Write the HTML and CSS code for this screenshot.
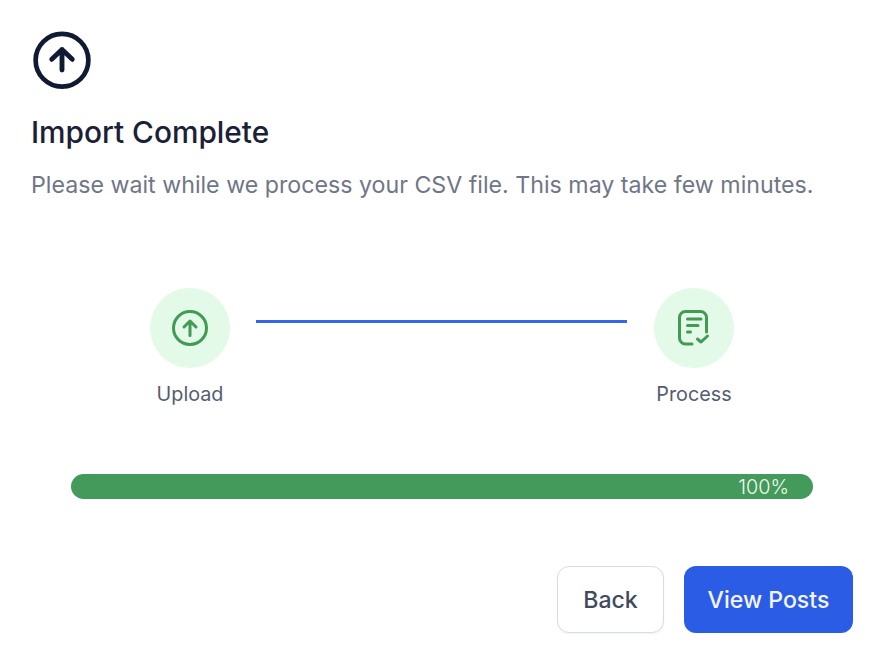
FILE: index.html
```html
<!DOCTYPE html>
<html lang="en">
<head>
    <meta charset="UTF-8">
    <meta name="viewport" content="width=device-width, initial-scale=1.0">
    <title>Import Complete</title>
    <link rel="stylesheet" href="styles.css">
</head>
<body>
    <div class="import-modal">
        <svg class="header-icon" viewBox="0 0 60 60" fill="none" stroke="#111a33" stroke-linecap="round" stroke-linejoin="round">
            <circle cx="30" cy="30" r="27" stroke-width="4.8"/>
            <path d="M30 40V19M19.5 29L30 19L40.5 29" stroke-width="5"/>
        </svg>
        <h1>Import Complete</h1>
        <p class="subtitle">Please wait while we process your CSV file. This may take few minutes.</p>

        <div class="steps">
            <div class="step">
                <div class="step-circle">
                    <svg class="step-icon" viewBox="0 0 36 36" fill="none" stroke="#439a55" stroke-width="3" stroke-linecap="round" stroke-linejoin="round">
                        <circle cx="18" cy="18" r="16.5"/>
                        <path d="M18 25.5V11M12 17L18 11L24 17"/>
                    </svg>
                </div>
                <span class="step-label">Upload</span>
            </div>
            <div class="step-line"></div>
            <div class="step">
                <div class="step-circle">
                    <svg class="step-icon" viewBox="0 0 36 36" fill="none" stroke="#439a55" stroke-width="3" stroke-linecap="round" stroke-linejoin="round">
                        <path d="M16 34H9.5a6 6 0 0 1-6-6V7.5a6 6 0 0 1 6-6H24.500a6 6 0 0 1 6 6V22"/>
                        <path d="M11.500 9H25M11.500 15.500H22M11.500 22H14.500"/>
                        <path d="M21.500 29L25 32L31.500 26"/>
                    </svg>
                </div>
                <span class="step-label">Process</span>
            </div>
        </div>

        <div class="progress-bar">
            <div class="progress-fill">100%</div>
        </div>

        <div class="button-group">
            <button class="btn btn-back">Back</button>
            <button class="btn btn-primary">View Posts</button>
        </div>
    </div>
</body>
</html>
```

FILE: styles.css
```css
* {
    box-sizing: border-box;
}

body {
    font-family: Inter, "Liberation Sans", sans-serif;
    margin: 0;
    padding: 0;
    background: #fff;
}

.import-modal {
    width: 882px;
    height: 659px;
    padding: 31px 29px 26px 31px;
    display: flex;
    flex-direction: column;
}

.header-icon {
    width: 60px;
    height: 60px;
    margin-left: 1px;
    display: block;
}

h1 {
    margin: 24px 0 0;
    font-size: 29.8px;
    line-height: 36px;
    font-weight: 500;
    color: #1a2136;
}

.subtitle {
    margin: 20px 0 0;
    font-size: 23.2px;
    line-height: 30px;
    color: #6f7687;
}

.steps {
    display: flex;
    align-items: flex-start;
    margin: 88px 0 0 119px;
}

.step {
    width: 80px;
    display: flex;
    flex-direction: column;
    align-items: center;
}

.step-circle {
    width: 80px;
    height: 80px;
    border-radius: 50%;
    background: #e2fae7;
    display: flex;
    align-items: center;
    justify-content: center;
}

.step-icon {
    width: 36px;
    height: 36px;
}

.step-label {
    margin-top: 13px;
    font-size: 19.8px;
    line-height: 26px;
    color: #555d70;
    white-space: nowrap;
}

.step-line {
    width: 371px;
    height: 3px;
    margin: 32px 27px 0 26px;
    background: #3565e8;
}

.progress-bar {
    width: 742px;
    height: 26px;
    margin: 67px 0 0 40px;
    border-radius: 13px;
    background: #e5e7eb;
    overflow: hidden;
}

.progress-fill {
    width: 100%;
    height: 100%;
    padding-right: 24px;
    background: #439a5b;
    color: #f0f7f1;
    font-size: 19.8px;
    line-height: 26px;
    font-weight: 300;
    text-align: right;
}

.button-group {
    display: flex;
    justify-content: flex-end;
    gap: 20px;
    margin-top: 67px;
}

.btn {
    height: 67px;
    font-family: inherit;
    font-size: 23.1px;
    font-weight: 500;
    border-radius: 12px;
    cursor: pointer;
}

.btn-back {
    width: 107px;
    background: #fff;
    color: #414a5c;
    border: 1px solid #d9dbe3;
    box-shadow: 0 1px 2px rgba(0, 0, 0, 0.05);
}

.btn-primary {
    width: 169px;
    background: #2b5ce6;
    color: #f2f5ff;
    border: none;
}
```
